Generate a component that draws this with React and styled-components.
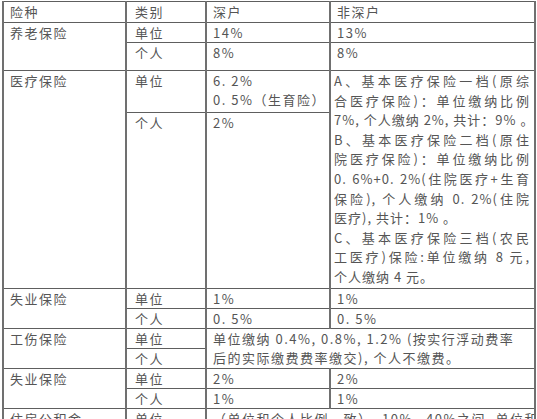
import React from "react";
import styled, { createGlobalStyle } from "styled-components";

const GlobalStyle = createGlobalStyle`
  html, body {
    margin: 0;
    padding: 0;
    background: #fff;
    overflow: hidden;
  }
  body {
    font-family: "Noto Sans CJK SC", "Noto Sans", sans-serif;
  }
`;

const Sheet = styled.table`
  border-collapse: collapse;
  table-layout: fixed;
  width: 532px;
  margin: 1px 0 0 2px;
  font-size: 13px;
  color: #555;
  letter-spacing: 1.5px;
`;

const Row = styled.tr`
  height: ${(p) => p.$h || 20}px;
`;

const Cell = styled.td`
  border-left: 2px solid #707070;
  border-right: 2px solid #707070;
  border-top: 1px solid #5e5e5e;
  border-bottom: 1px solid #5e5e5e;
  padding: 0 4px 0 ${(p) => (p.$pad != null ? p.$pad : 6)}px;
  vertical-align: top;
  line-height: 19px;
  white-space: nowrap;
  overflow: hidden;
`;

const Note = styled.div`
  display: block;
  line-height: 19.6px;
  white-space: nowrap;
  text-align: ${(p) => (p.$last ? "left" : "justify")};
  text-align-last: ${(p) => (p.$last ? "left" : "justify")};
  letter-spacing: 1px;
`;

const medical = [
  ["A、基本医疗保险一档(原综", false],
  ["合医疗保险)：单位缴纳比例", false],
  ["7%, 个人缴纳 2%, 共计：9% 。", false],
  ["B、基本医疗保险二档(原住", false],
  ["院医疗保险)：单位缴纳比例", false],
  ["0. 6%+0. 2%(住院医疗+生育", false],
  ["保险), 个人缴纳 0. 2%(住院", false],
  ["医疗), 共计：1% 。", true],
  ["C、基本医疗保险三档(农民", false],
  ["工医疗)保险:单位缴纳 8 元,", false],
  ["个人缴纳 4 元。", true],
];

export default function App() {
  return (
    <>
      <GlobalStyle />
      <Sheet>
        <colgroup>
          <col style={{ width: 123 }} />
          <col style={{ width: 80 }} />
          <col style={{ width: 124 }} />
          <col style={{ width: 205 }} />
        </colgroup>
        <tbody>
          <Row $h={21}>
            <Cell>险种</Cell>
            <Cell $pad={8}>类别</Cell>
            <Cell>深户</Cell>
            <Cell>非深户</Cell>
          </Row>

          <Row $h={20}>
            <Cell rowSpan={2}>养老保险</Cell>
            <Cell $pad={8}>单位</Cell>
            <Cell>14%</Cell>
            <Cell>13%</Cell>
          </Row>
          <Row $h={28}>
            <Cell $pad={8}>个人</Cell>
            <Cell>8%</Cell>
            <Cell>8%</Cell>
          </Row>

          <Row $h={42}>
            <Cell rowSpan={2}>医疗保险</Cell>
            <Cell $pad={8}>单位</Cell>
            <Cell>
              6. 2%
              <br />
              0. 5%（生育险）
            </Cell>
            <Cell rowSpan={2} $pad={3}>
              {medical.map(([t, last], i) => (
                <Note key={i} $last={last}>
                  {t}
                </Note>
              ))}
            </Cell>
          </Row>
          <Row $h={176}>
            <Cell $pad={8}>个人</Cell>
            <Cell>2%</Cell>
          </Row>

          <Row>
            <Cell rowSpan={2}>失业保险</Cell>
            <Cell $pad={8}>单位</Cell>
            <Cell>1%</Cell>
            <Cell>1%</Cell>
          </Row>
          <Row>
            <Cell $pad={8}>个人</Cell>
            <Cell>0. 5%</Cell>
            <Cell>0. 5%</Cell>
          </Row>

          <Row>
            <Cell rowSpan={2}>工伤保险</Cell>
            <Cell $pad={8}>单位</Cell>
            <Cell colSpan={2} rowSpan={2}>
              单位缴纳 0.4%, 0.8%, 1.2% (按实行浮动费率
              <br />
              后的实际缴费费率缴交), 个人不缴费。
            </Cell>
          </Row>
          <Row>
            <Cell $pad={8}>个人</Cell>
          </Row>

          <Row>
            <Cell rowSpan={2}>失业保险</Cell>
            <Cell $pad={8}>单位</Cell>
            <Cell>2%</Cell>
            <Cell>2%</Cell>
          </Row>
          <Row>
            <Cell $pad={8}>个人</Cell>
            <Cell>1%</Cell>
            <Cell>1%</Cell>
          </Row>

          <Row>
            <Cell>住房公积金</Cell>
            <Cell $pad={8}>单位</Cell>
            <Cell colSpan={2}>（单位和个人比例一致）, 10%—40%之间, 单位和个人</Cell>
          </Row>
        </tbody>
      </Sheet>
    </>
  );
}
